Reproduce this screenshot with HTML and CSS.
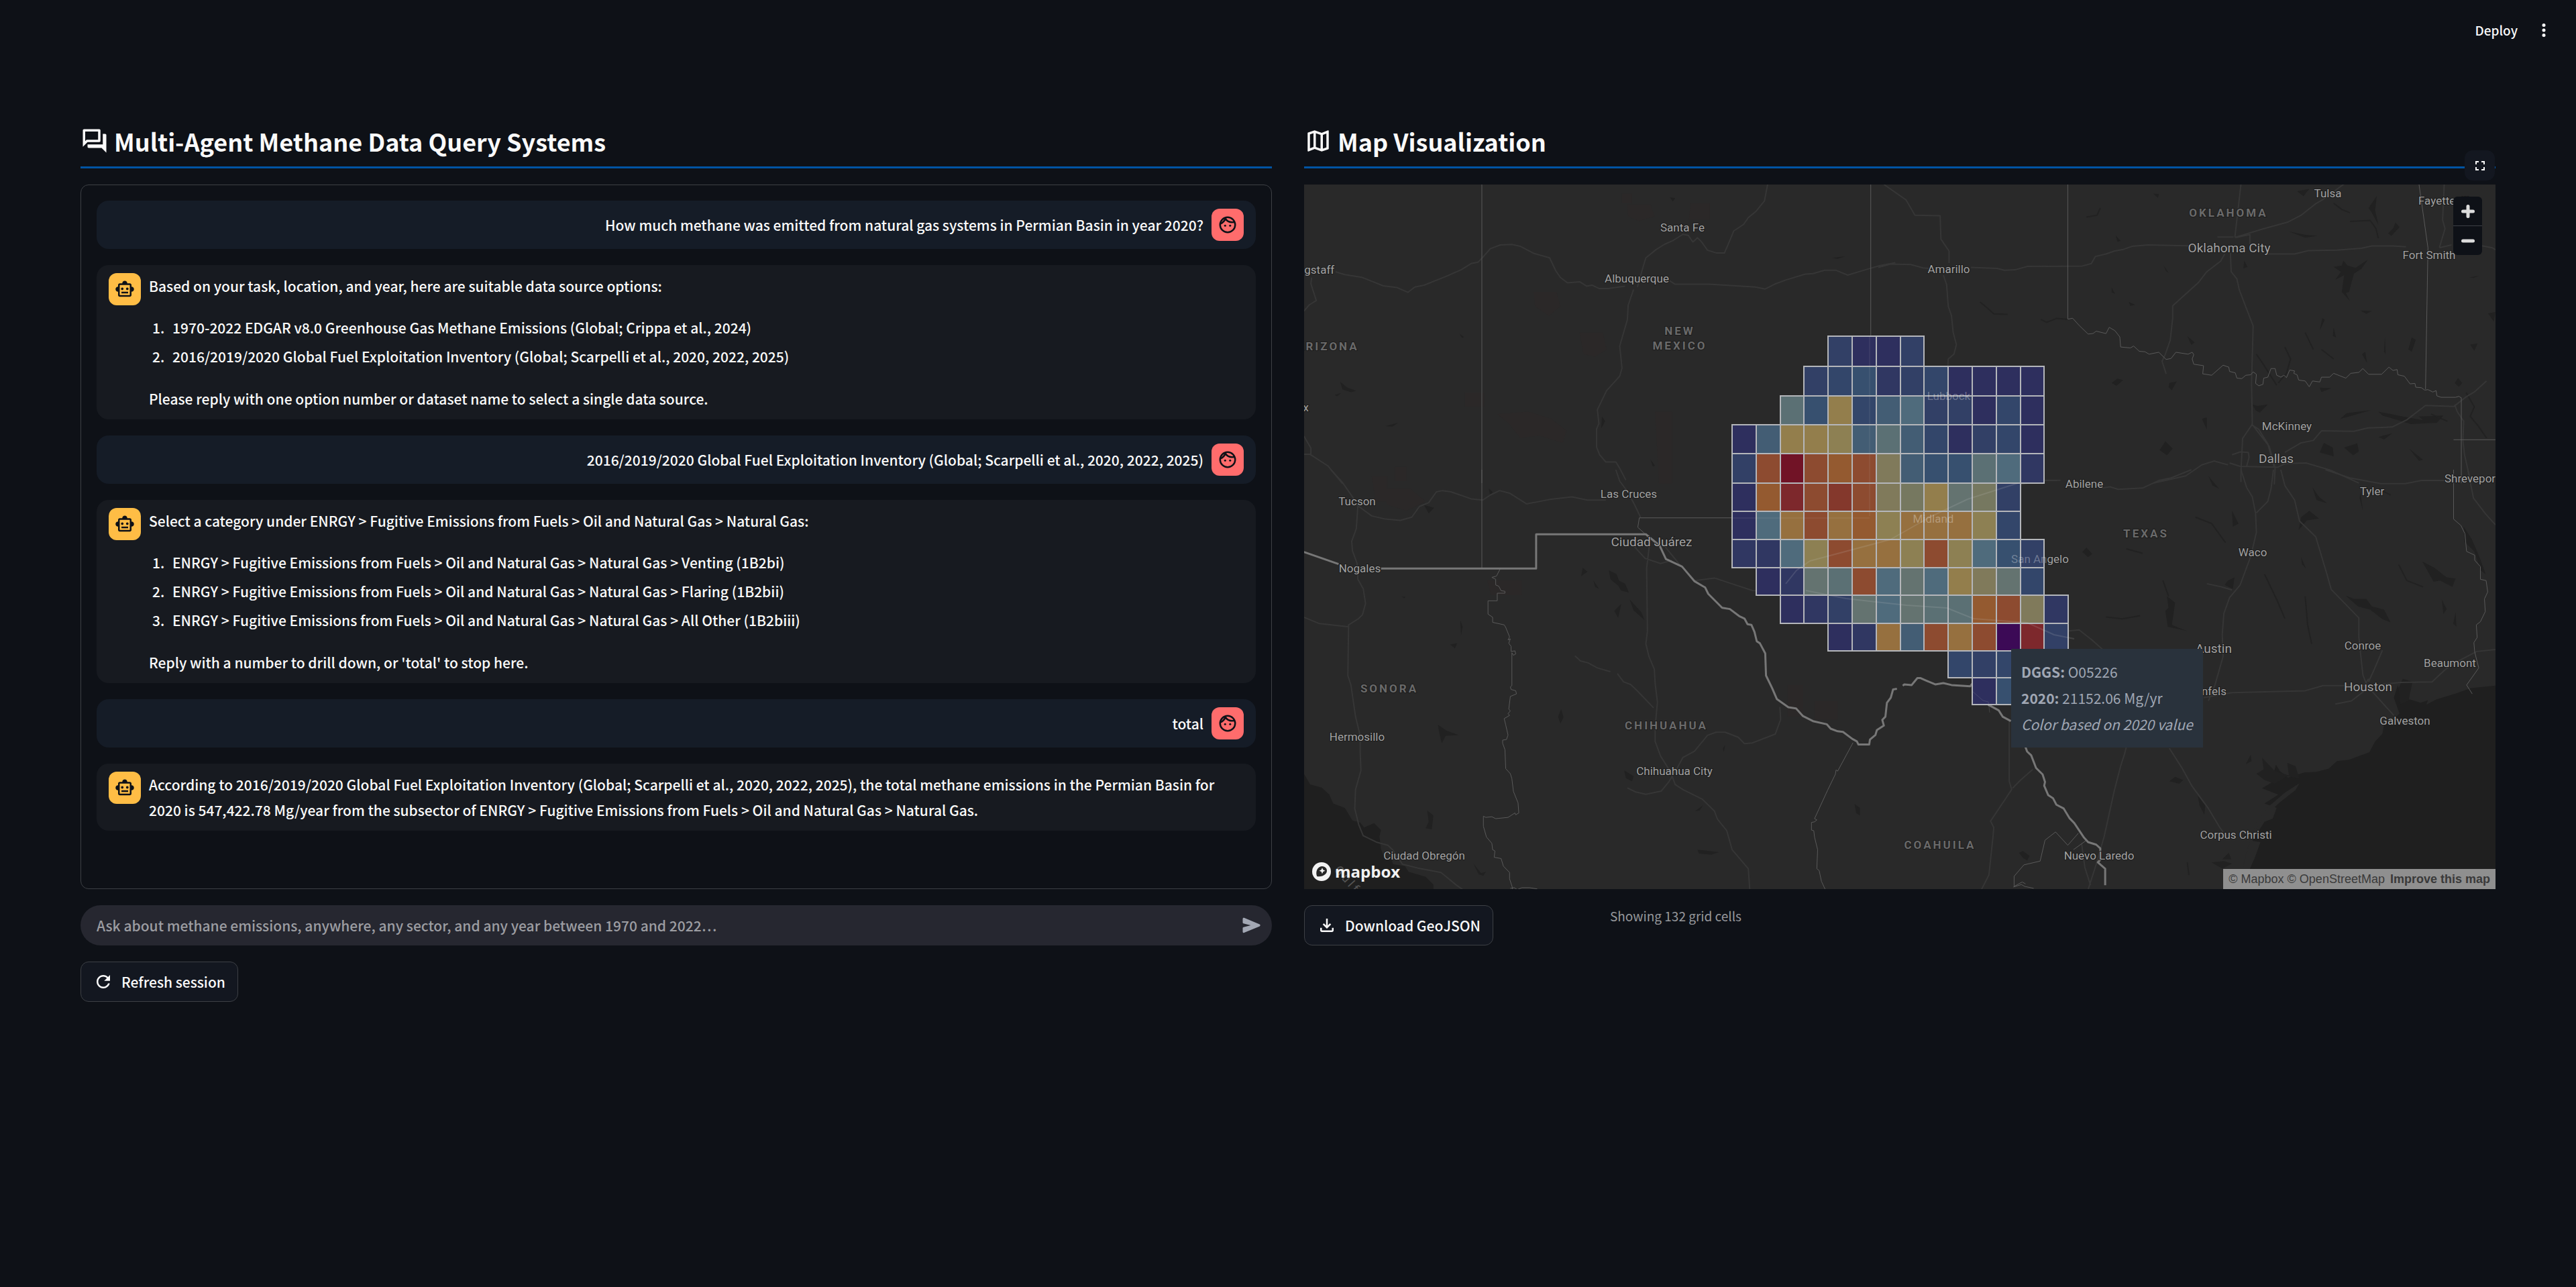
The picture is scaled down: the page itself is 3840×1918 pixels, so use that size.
FILE: index.html
```html
<!DOCTYPE html>
<html lang="en">
<head>
<meta charset="utf-8">
<meta name="viewport" content="width=device-width, initial-scale=1">
<title>Multi-Agent Methane Data Query Systems</title>
<link rel="stylesheet" href="styles.css">
</head>
<body>
<svg class="sprite" aria-hidden="true">
  <symbol id="i-face" viewBox="0 0 24 24"><g fill="none" stroke="currentColor" stroke-width="2"><circle cx="12" cy="12" r="9"/><path d="M3.400 10.800C6.200 9.700 8.300 7.600 9.400 4.400M9.300 4.600C11 7.500 14 9 17.500 9c1 0 1.900-.1 2.700-.3"/></g><circle cx="9" cy="13" r="1.250"/><circle cx="15" cy="13" r="1.250"/></symbol>
  <symbol id="i-bot" viewBox="0 0 24 24"><path d="M20 9V7c0-1.1-.9-2-2-2h-3c0-1.66-1.34-3-3-3S9 3.34 9 5H6c-1.1 0-2 .9-2 2v2c-1.66 0-3 1.34-3 3s1.34 3 3 3v4c0 1.1.9 2 2 2h12c1.1 0 2-.9 2-2v-4c1.66 0 3-1.34 3-3s-1.34-3-3-3zm-2 10H6V7h12v12zm-9-6c-.83 0-1.5-.67-1.5-1.5S8.17 10 9 10s1.5.67 1.5 1.5S9.83 13 9 13zm7.5-1.5c0 .83-.67 1.5-1.5 1.5s-1.5-.67-1.5-1.5.67-1.5 1.5-1.5 1.5.67 1.5 1.5zM8 15h8v2H8v-2z"/></symbol>
</svg>

<header class="topbar">
  <button class="deploy" type="button">Deploy</button>
  <button class="menu" type="button" aria-label="Main menu">
    <svg viewBox="0 0 24 24" class="icon"><circle cx="12" cy="6" r="2"/><circle cx="12" cy="12" r="2"/><circle cx="12" cy="18" r="2"/></svg>
  </button>
</header>

<main class="columns">
  <section class="column">
    <h2 class="title">
      <svg viewBox="0 0 24 24" class="icon icon-title"><path d="M15 4v7H5.17L4 12.17V4h11m1-2H3c-.55 0-1 .45-1 1v14l4-4h10c.55 0 1-.45 1-1V3c0-.55-.45-1-1-1zm5 4h-2v9H6v2c0 .55.45 1 1 1h11l4 4V7c0-.55-.45-1-1-1z"/></svg>
      Multi-Agent Methane Data Query Systems
    </h2>
    <div class="chat">
      <article class="message user">
        <div class="avatar"><svg class="icon"><use href="#i-face"/></svg></div>
        <div class="text"><p>How much methane was emitted from natural gas systems in Permian Basin in year 2020?</p></div>
      </article>
      <article class="message bot">
        <div class="avatar"><svg class="icon"><use href="#i-bot"/></svg></div>
        <div class="text">
          <p>Based on your task, location, and year, here are suitable data source options:</p>
          <ol>
            <li>1970-2022 EDGAR v8.0 Greenhouse Gas Methane Emissions (Global; Crippa et al., 2024)</li>
            <li>2016/2019/2020 Global Fuel Exploitation Inventory (Global; Scarpelli et al., 2020, 2022, 2025)</li>
          </ol>
          <p>Please reply with one option number or dataset name to select a single data source.</p>
        </div>
      </article>
      <article class="message user">
        <div class="avatar"><svg class="icon"><use href="#i-face"/></svg></div>
        <div class="text"><p>2016/2019/2020 Global Fuel Exploitation Inventory (Global; Scarpelli et al., 2020, 2022, 2025)</p></div>
      </article>
      <article class="message bot">
        <div class="avatar"><svg class="icon"><use href="#i-bot"/></svg></div>
        <div class="text">
          <p>Select a category under ENRGY &gt; Fugitive Emissions from Fuels &gt; Oil and Natural Gas &gt; Natural Gas:</p>
          <ol>
            <li>ENRGY &gt; Fugitive Emissions from Fuels &gt; Oil and Natural Gas &gt; Natural Gas &gt; Venting (1B2bi)</li>
            <li>ENRGY &gt; Fugitive Emissions from Fuels &gt; Oil and Natural Gas &gt; Natural Gas &gt; Flaring (1B2bii)</li>
            <li>ENRGY &gt; Fugitive Emissions from Fuels &gt; Oil and Natural Gas &gt; Natural Gas &gt; All Other (1B2biii)</li>
          </ol>
          <p>Reply with a number to drill down, or 'total' to stop here.</p>
        </div>
      </article>
      <article class="message user">
        <div class="avatar"><svg class="icon"><use href="#i-face"/></svg></div>
        <div class="text"><p>total</p></div>
      </article>
      <article class="message bot">
        <div class="avatar"><svg class="icon"><use href="#i-bot"/></svg></div>
        <div class="text"><p>According to 2016/2019/2020 Global Fuel Exploitation Inventory (Global; Scarpelli et al., 2020, 2022, 2025), the total methane emissions in the Permian Basin for 2020 is 547,422.78 Mg/year from the subsector of ENRGY &gt; Fugitive Emissions from Fuels &gt; Oil and Natural Gas &gt; Natural Gas.</p></div>
      </article>
    </div>
    <form class="prompt">
      <input class="prompt-input" type="text" aria-label="Question" placeholder="Ask about methane emissions, anywhere, any sector, and any year between 1970 and 2022…">
      <button class="send" type="button" aria-label="Send">
        <svg viewBox="0 0 24 24" class="icon"><path d="M3 5.51v3.71c0 .46.31.86.76.97L11 12l-7.24 1.81c-.45.12-.76.52-.76.97v3.71c0 .72.73 1.2 1.39.92l15.42-6.49c.82-.34.82-1.5 0-1.84L4.39 4.58C3.73 4.31 3 4.79 3 5.51z"/></svg>
      </button>
    </form>
    <button class="button" type="button">
      <svg viewBox="0 0 24 24" class="icon"><path d="M17.65 6.35C16.2 4.9 14.21 4 12 4c-4.42 0-7.99 3.58-7.99 8s3.57 8 7.99 8c3.73 0 6.84-2.55 7.73-6h-2.08c-.82 2.33-3.04 4-5.65 4-3.31 0-6-2.69-6-6s2.69-6 6-6c1.66 0 3.14.69 4.22 1.78L13 11h7V4l-2.35 2.35z"/></svg>
      Refresh session
    </button>
  </section>

  <section class="column">
    <h2 class="title">
      <svg viewBox="0 0 24 24" class="icon icon-title"><path d="M20.5 3l-.16.03L15 5.1 9 3 3.36 4.9c-.21.07-.36.25-.36.48V20.5c0 .28.22.5.5.5l.16-.03L9 18.9l6 2.1 5.64-1.9c.21-.07.36-.25.36-.48V3.5c0-.28-.22-.5-.5-.5zM10 5.47l4 1.4v11.66l-4-1.4V5.47zm-5 .99l3-1.01v11.7l-3 1.16V6.46zm14 11.08l-3 1.01V6.86l3-1.16v11.84z"/></svg>
      Map Visualization
    </h2>
    <div class="map">
      <svg class="basemap" viewBox="0 0 1776 1050" preserveAspectRatio="xMidYMid slice" role="img" aria-label="Methane emissions over the Permian Basin">
        <g class="nw" transform="translate(-14 -115) scale(.574 .3571)">
          <path class="lake" d="M118 1145l18 24 24 14-14 6-22-12zM236 1330l32-14-14 16zM796 1340l2-50 8 20zM924 1470l12 26-6 2zM1396 628l34-6-20 10zM428 945l12 14-6 2zM974 375l14 4-6 14zM104 1200l16-8-10 14z"/>
          <path class="woods" d="M850 360h26v40h-26zM864 405h60l10 50-40 20-28-20zM1028 400h50v70h-54zM620 770h60l10 60-30 40-36-40zM740 940h60l10 70-30 30-30-10zM526 1280l80-10 60 30 40 50-10 50-60-30-50 10-30-60zM936 1270h44v300h-34zM260 1500h30v60h-30zM442 1190h50v60h-50z"/>
          <path class="road" d="M106 686l24 12 44 11 56 36 36 7 28 20 18-22 24-8 56-36 40-28 26-26 18-6 10-16 22-40 26-16 30-2 22 8 36 30 40 18 16 54 12 28 18 22 32-4 18 18 14-4 18 14h24l44-10M880 760l-14 66-2 60-20 110 6 92-6 34-34 60-24 80 4 58-6 22v76l8 32 16 30h26l10 26 16 50M890 750l14-80 8-42 26-34 22-22 22-16 26-26 14 4 12 28 12-18 10 16 16 36 24 12h20l16-60 8-32 26-28 12-28 20-26 22-44 10-84M970 720l18 18h88l120 12 26 8 24-20 30-18 50-24 20-2 30-14h30l30 20 50-24 34-16 40-12M24 850l14-26 18-18-14-70 2-26M24 1372l18 50v26H24M40 1448l46 48 38 74"/>
          <path class="state" d="M486 321V1568M1496 321V960"/>
          <path class="state" d="M1530 321l40 46" opacity=".5"/>
        </g>
        <g class="ne" transform="translate(856 -115) scale(.606 .3571)">
          <path class="lake" d="M584 535l12 22-8 4zM676 360l14 2-2 16zM1144 640l10 20 20 10 30-34-16 38-18 20-6 36-6 40-8 4 10 34-20-38 6-70-22 20 14-34-18-20 20-6zM900 640l8 26-10 6zM702 660l12 30-6-6zM574 752l8 26-8-6zM616 812l16 12-12 4zM760 955l18 26-8 10zM1186 848l28 2-14 12zM1206 420l20-50-4 60 8 60-16-50zM1272 480l10 20-20 36-8-10 12-20zM1010 518l40 14 30 4-30 8zM574 1150l14-18 14 6-16 24zM716 1150l18-6-12 36-8-12zM920 1240l12 6 26-6-20 34-10-10zM1086 1170l28 2-24 16zM1136 1300l16-24 60-12-50 24zM1230 1270l60 20 50 16-30-46 20 30 60-4-16 30-64 6-70-36zM692 1430l14-36 18 30-14 28zM796 1300l12-6v50zM1086 1440l10-40 22 20 2 36zM1146 1420l32-18 4 34-14 16zM1306 1425l34 46-10 4zM1230 1376l34-16-20 26zM1418 1150l8-20 10 20-8 16zM1312 960l10 10-10 50-8-10zM1190 1030l8-10 4 46zM1092 880l6 6-12 44zM1120 920l6 40-8-6zM1246 960l2 70-4-10zM1500 860l18-6-4 40zM1030 350l30-10-14 30zM1456 990l18-4-8 30zM1454 710l24-8-14 10z"/>
          <path class="stream" d="M250 812l20 28 14 22 34 2M400 885l14 12 24-16 30 4M512 458l26-8 8-30M1120 400l20 26 20 14M1160 476l50-4 14 34 6 40M930 1030l20 50 30 80M1050 940l20 70M1090 1010l30 40M1000 1000l14 50-10 60-20 40M1360 1280l40 30M1446 1190l20 60-10 40 20 40 20 50"/>
          <path class="road" d="M0 668l30-14 50 2 30 14 14 2M228 668l64 4 18 8 26-2 30-14 136-2 22-10 10-30 26-10 20-12 24-8 20-12 40-6 114 4M160 700l8 40 4 90 8 40 4 68 8 52-6 40-14 20-2 60M174 650v-50l-20-50-2-98-62-2-22-64-54-64M892 321l-15 222M877 543l70-36 60-28 34-30 34-46 20-20 64-80M880 543l34-12v40M834 541h40M852 612l-10 30-34 44-20 44-64 98v54l-6 90-12 58-8 30 10 52M866 606l2 80 14 30 6 46 18 80 16 70-4 240 2 170-24 60-4 140v42M954 612h70l34-14 70-2 60-8 26-10h50l34 4M1380 586l14-80-6-36 4-150M1380 586l30-12M1480 576l30 10 8 8M918 1320l44 96 14 88-2 70M918 1324l18 20 22 60 16 100M870 1450l20-12 20 2 2 20-6 38M864 1484l26 14 92 4 20-16 50-2 60 30 70 54M1000 1440l40-40 30-10 20-40 80 2 34-14 60-4 36-30 46-60 70 4 30-40 20-20 30-46M1418 1240l6 30 16 40-2 80 4 60 16 120M676 1568l80-30 40-46 30-16 34 16M408 1556h40"/>
          <path class="state" d="M466 321V884l12-4 16 30 22 36 12-2 8-10 24 10 8-26 14 14 12 26 2 42 24 4 8-8 14 22 14 2 10 10 24-8 18 30 12-4 12-26 30 8 10-8 4 10-4 18 4 22 24 6-2 34 22 6 28-42 14 8 2 18 14 6 4 22 12 2 10-14 12-2 6-12 8 10-2 38 8 10 10-6 2-26 10-4 8-36h10l4 28 10 8 8-8 6 10 8-32 12 4-2 10 8 6 4 22 16 4 10 24 8-24 18 4 4-20h20l10-16 30 20 12-20 20-4 10-16 14 24h32l18-30 10 14 10-4 2 22 16 6 14 32 12-2 2 16 14 2 8 10 8-2 12 10 8-6 2 22 10 6h36l8-4 6 6V1568M1330 321l22 265-6 590M1415 1387h103"/>
        </g>
        <g class="sw" transform="translate(-14 425) scale(.574 .4719)">
          <path class="water" d="M0 940l24 20 16 34 30 10 20 22 10 28 30 14 20 40 20 6 10 16 26-14 18 22-4 20 4 40 6 20 20 12 6 16 30 6 10 18 44 16 20 24v30H0z"/>
          <path class="lake" d="M336 112l26 8-14 18zM504 60l10 10-6 14zM816 318l20 12 6 20 16 10 10 28-20-6-8-16-20-20zM870 410l30 40 8 24-28-30zM830 446l18-22-8 44zM776 350l14 26-10-6zM748 310l12 12-16 14zM684 780l8-24 6 26-8 20zM372 806l22 18 32 14-34 2-10 24-6-30zM344 1076l16 16-4 44-16-4 8-20zM1046 1200l30 4 26 4-20 8-32-4zM1454 1056l14 12v24l-10-8zM464 1244l20 30 12-4-6 12-12-4zM856 950l24 18-4 16-16-10zM1112 880l6-10-4 22zM278 400l10 2-4 4zM430 476l6 20-4 28zM404 552l18-4-6 16zM1040 1078l20-18-8 16z"/>
          <path class="woods" d="M230 60h70l40 40-50 30-50-20zM500 350h90v46h-80zM1280 680h40v100h-40zM1350 730h60v60h-60zM200 20h40v80h-30z"/>
          <path class="road" d="M160 110l40 36 36 10 38 4 30-10 20-34 24-12 20-34 16-4 22 4 52 22 30 4 20-16 24-14 26 8 44 34 60-14 58-8 40 10h48M164 116l-4 70-12 40 2 30 12 40 2 50 14 30 6 46-8 36-10 12-26 20-2 160 8 30 12 100 12 60v50l2 60-14 60-2 60 10 50 12 36 34 20 30 10 12 14 26 46 40 12 60 14 40 40 40 34 8 30M24 466l40 20 74 10M94 0l30 40 34 60M834 0l10 36 20 32 20 46 14 36M922 230l-8 80 2 200-4 40 8 40 14 40 2 44 6 60-6 80v44l14 46 26 50 12 40 20 16 50 30 32 38 8 26 24 36 14 60 42 60 4 70 38 48M728 588l14 16 20 6 24 16 34 12M838 644l16 26 18 8 16 18 44 56M864 1005l20 12 28 8 40-10 20-30 20-40 16-36 30-20 34-50 22-10h24l34 16 16 20 20-2 60-28 14-46-2-40M880 240l30 40 40 16 30-10M960 240l40 60 40 50 50-8 50 20 50 20h60"/>
          <path class="state" d="M486 0V312M1135 152H895l-4 30 20 22M534 312l-10 24-12 4 10 6v18l8 4 6 14 10 2v6h-20v24h-24v42l12 10v16l30 8 4 8 10 30-4 10 6-4-4 14 6 10v16l10-2 2 10-6 4-4-8v104l-4 4 2 8 12 4 2 10-16 8-4 40 4 6-6 8 4 6-14 10 4 20 6 32-4 14-10 2v10l6 20 2 60 12 16 4 16 4 40 12 36 2 32-8 6-2-6-18 14-32 4-10-6-16 2-6-4v32l8 34 14 20 2 20 6 4-2 20 18 4 6 24 16 20v20l8 30-10 20v16l10 12-2 14M560 1322l10-2 8 6 12-6h20l20 4M1450 862l-40 90-4-4-2 14-20 50-34 90 6 4-6 6-8 2v24l6 2 2 20 8 40-2 60 6 6 6 34 10 26"/>
          <path class="border" d="M24 260l90 38M224 312H627V204H912l36 36 16 42 42 24 32 46 28 20 8 20 36 44 20 4 24 22 14 8 8 18 10 2 8 22 6 30 8 6 14 32 2 70 16 40 12 34 30 26 20 4 18 24 26 16 36 10 10 14 18 8 14 2 24 22 12 8 4 10h28l2-16 14-14 4-16 18-14-4-18 8-10 4-44 10-16 6-26 10-2"/>
        </g>
        <g class="se" transform="translate(856 425) scale(.606 .4719)">
          <path class="water" d="M1518 682l-60 8-36 16-50 20-24 16 4-14-18 8-26-10-20 4-10-50-10 40 14 50-16 20-22 14-4 30-18 24-14 34-50 24-30 4-20 24-30 10-30 2-40 16-20-20-10-20-6 30-16-10 14 34-26 20 40 20-34 28 30 14-10 34-20 10-30 60 20 4-14 50-14 40-10 54-12 60h634z"/>
          <path class="land" d="M1036 990l-36 30-40 44-30 50-16 60-14 60-4 28 10-50 14-60 26-50 40-50 40-40z"/>
          <path class="lake" d="M812 20l26 40-16-10zM1068 56l16 30 20 20-26-10zM1186 70l6 60-8-40zM1040 150l20-20 24 24-30 6-20 30zM870 130l16 40-14 10zM502 260l10-14 14 20-10 10zM1040 276l12 36-10-14zM1338 290l30 20 30 30 22 4-8 26-30-20-16 4zM860 350l16-10-4 36-20-12zM710 400l20 20-8 70 38 20-12-4-36-10-6-50 8-10zM1150 398l20 10 30 0 14 24 30 10 16 40-20-10-30-30-30-10zM1386 410l12 30-8 16zM1420 450l2 46-8-10zM930 960l20 20 26 12 30-24 30 8-10-40-20-10 4 40-36-16-30-40 4 36zM716 984l14-14 20 10-10 12zM786 1030l18 30-2 30-12-30zM346 1210l10-6 16 16-6 14-10-8zM820 1240l30-4 20 8-24 16zM904 930l12-30 2 20zM846 1230l16-20 6 20zM1280 690l10-30 24 10-10 60-20 10zM1440 180l20 40 20 60 14 50-12-12-16-60-24-30z"/>
          <path class="stream" d="M610 250l40 14M560 465l40 6 44-10M780 150l40 20 34 60M1230 60l30 20M1280 300l20 50 40 20M950 330l30 80 20 60M1050 400l6 90 10 60M700 350l14 50M760 1240l4 40"/>
          <path class="road" d="M770 0l-50 26-30 8-40 24-60 4-20-8-20 4M440 34h-40l-60 16M892 0l14 56 14 30 8 52 2 60-14 76-26 90-26 40-14 50-4 66 2 70-20 90-16 50M972 0l-6 60-8 40-28 36M990 0l10 50 24 46 12 66 40 50 28 120 10 46 68 90v60l4 50 6 70 10 34 66 94M1100 0l60 26 76 18h60l40-10h74M808 360l36 10 26 10M410 520l50-10 34-4 30 30 30 34M800 720l70-16 180-6 44-16h110l80-10 78-2 30-36 20-20 60-40 46-6M1206 660l-10 20M1240 570l-20 60-14 40M1124 740l40-10 40-40M716 880l30 60 26 60 40 70 28 60 8 14M610 876l-4 20-10 40-16 80-24 140-20 90-20 80M322 794v190l6 26-52 100 8 20-2 30-10 120-20 50M380 946l-30 34-20 26M500 1180l8 76 14 56M1450 0l14 90 30 50 24 34"/>
          <path class="state" d="M1415 0v156l18 20 10 26 4 56 20 12v16l14 20v40l14 4 4 36-8 22 2 40-12 32-10 10 2 40-8 16 2 30 10 50-30 54 14 28M492 1148l-26 38-30-42-26 26-12 66-40 12-24 36v32l20-14 8 6M510 1172l-30 28M332 1318l20-8 8 6 22 6"/>
          <path class="border" d="M60 682l4-4 18 2 14-22 8 0 14 8 22 12 20-4 20 6 46 4 6-10M270 742l26 18 10 20 20 14M362 876l4 14 10 12 12 40 16 20 6 24-2 12 10 30 12 10 8 20 18 12 14 30 12 16 24 46 10 14 20 8 10 12v36l-6 8 18 20v52"/>
        </g>
        <g class="cells"></g>
        <g class="overlines">
          <path class="road" d="M1064 445l-75 24-55 26-60 34-120 32-20 14-16 20M748 605l60 12 90 10 60 4 40 16 80 6 40 18 30 6"/>
          <path class="state" d="M843 226v268M637 497h206M996 755l16 14 8 2 2 16"/>
        </g>
        <g class="places">
          <text class="city" x="564" y="70">Santa Fe</text>
          <text class="city" x="496" y="146">Albuquerque</text>
          <text class="city" x="-9" y="133" text-anchor="start">agstaff</text>
          <text class="city" x="961" y="132">Amarillo</text>
          <text class="metro" x="1379" y="101">Oklahoma City</text>
          <text class="city" x="1526" y="19">Tulsa</text>
          <text class="city" x="1661" y="30" text-anchor="start">Fayetteville</text>
          <text class="city" x="1677" y="111">Fort Smith</text>
          <text class="city" x="1465" y="366">McKinney</text>
          <text class="metro" x="1449" y="415">Dallas</text>
          <text class="city" x="1163" y="452">Abilene</text>
          <text class="city" x="1592" y="463">Tyler</text>
          <text class="city" x="1700" y="444" text-anchor="start">Shreveport</text>
          <text class="city" x="1414" y="554">Waco</text>
          <text class="city covered" x="961" y="321">Lubbock</text>
          <text class="city covered" x="938" y="504">Midland</text>
          <text class="city" x="1097" y="564"><tspan class="covered">San An</tspan>gelo</text>
          <text class="metro" x="1356" y="698">Austin</text>
          <text class="city" x="1578" y="693">Conroe</text>
          <text class="city" x="1708" y="719">Beaumont</text>
          <text class="metro" x="1586" y="755">Houston</text>
          <text class="city" x="1375" y="761" text-anchor="end">New Braunfels</text>
          <text class="city" x="1641" y="805">Galveston</text>
          <text class="city" x="1389" y="975">Corpus Christi</text>
          <text class="city" x="1185" y="1006">Nuevo Laredo</text>
          <text class="city" x="79" y="478">Tucson</text>
          <text class="city" x="484" y="467">Las Cruces</text>
          <text class="metro" x="518" y="539">Ciudad Juárez</text>
          <text class="city" x="83" y="578">Nogales</text>
          <text class="city" x="79" y="829">Hermosillo</text>
          <text class="city" x="552" y="880">Chihuahua City</text>
          <text class="city" x="179" y="1006">Ciudad Obregón</text>
          <text class="city" x="7" y="338" text-anchor="end">Phoenix</text>
          <text class="region" x="560" y="224">NEW</text>
          <text class="region" x="560" y="246">MEXICO</text>
          <text class="region" x="-12" y="247" text-anchor="start">ARIZONA</text>
          <text class="region" x="1378" y="48">OKLAHOMA</text>
          <text class="region" x="1255" y="526">TEXAS</text>
          <text class="region" x="127" y="757">SONORA</text>
          <text class="region" x="540" y="812">CHIHUAHUA</text>
          <text class="region" x="948" y="990">COAHUILA</text>
          <text class="sea" transform="translate(44 1022) rotate(48)">Gulf</text>
        </g>
      </svg>
      <div class="zoom">
        <button class="zoom-button" type="button" aria-label="Zoom in"><svg viewBox="0 0 24 24" class="icon"><path d="M12 6v12M6 12h12"/></svg></button>
        <button class="zoom-button" type="button" aria-label="Zoom out"><svg viewBox="0 0 24 24" class="icon"><path d="M6 12h12"/></svg></button>
      </div>
      <button class="fullscreen" type="button" aria-label="Fullscreen">
        <svg viewBox="0 0 24 24" class="icon"><path d="M7 14H5v5h5v-2H7v-3zm-2-4h2V7h3V5H5v5zm12 7h-3v2h5v-5h-2v3zM14 5v2h3v3h2V5h-5z"/></svg>
      </button>
      <div class="tooltip"><b>DGGS:</b> O05226<br><b>2020:</b> 21152.06 Mg/yr<br><i>Color based on 2020 value</i></div>
      <a class="logo" href="#mapbox">
        <svg viewBox="0 0 28 28" class="logo-mark"><circle cx="14" cy="14" r="14" fill="#f2f2f2"/><path fill="#262626" d="M7.200 21C5 15 7 9.500 10.800 7.200c3.400-2 7.500-1.300 9.700 1.300 2.300 2.800 1.900 6.700-.8 9.300C16.400 21 11.500 21.600 7.200 21z"/><path fill="#f2f2f2" d="M15 8.200l1.400 3.100 3.100 1.400-3.100 1.400L15 17.200l-1.400-3.100-3.100-1.400 3.100-1.400z"/></svg>
        mapbox
      </a>
      <div class="attribution"><a href="#mapbox">© Mapbox</a> <a href="#osm">© OpenStreetMap</a> <a class="improve" href="#improve">Improve this map</a></div>
    </div>
    <div class="under-map">
      <div>
        <button class="button" type="button">
          <svg viewBox="0 0 24 24" class="icon"><path d="M18 15v3H6v-3H4v3c0 1.100.9 2 2 2h12c1.100 0 2-.9 2-2v-3h-2zm-1-4l-1.410-1.410L13 12.170V4h-2v8.170L8.410 9.590 7 11l5 5 5-5z"/></svg>
          Download GeoJSON
        </button>
      </div>
      <p class="caption">Showing 132 grid cells</p>
    </div>
  </section>
</main>
<script src="cells.js"></script>
</body>
</html>
```

FILE: styles.css
```css
* { box-sizing: border-box; }

body {
  margin: 0;
  min-height: 100vh;
  background: #0e1117;
  color: #fafafa;
  font-family: "Noto Sans CJK SC", "Noto Sans", sans-serif;
  font-size: 21px;
  font-weight: 500;
  line-height: 38px;
}

button, input { font: inherit; color: inherit; }
button { border: 0; background: none; padding: 0; cursor: pointer; }
p, h2, ol { margin: 0; }
a { color: inherit; text-decoration: none; }

.sprite { display: none; }
.icon { width: 30px; height: 30px; fill: currentColor; flex: none; }

.topbar {
  display: flex;
  justify-content: flex-end;
  align-items: center;
  gap: 24px;
  height: 90px;
  padding-right: 33px;
}
.deploy { font-size: 19px; }
.menu { display: flex; }

.columns {
  display: grid;
  grid-template-columns: 1fr 1fr;
  gap: 48px;
  padding: 96px 120px;
}
.column {
  display: flex;
  flex-direction: column;
  align-items: flex-start;
  gap: 24px;
  min-width: 0;
}

.title {
  display: flex;
  align-items: center;
  gap: 8px;
  width: 100%;
  padding-bottom: 14px;
  border-bottom: 3px solid #0054a3;
  font-size: 36px;
  font-weight: 700;
  line-height: 48px;
}
.icon-title { width: 42px; height: 42px; }

.chat {
  display: flex;
  flex-direction: column;
  gap: 24px;
  width: 100%;
  height: 1050px;
  padding: 23px;
  border: 1px solid #3d4045;
  border-radius: 12px;
  overflow: auto;
}
.message {
  display: flex;
  gap: 12px;
  padding: 12px 18px;
  border-radius: 18px;
}
.user {
  flex-direction: row-reverse;
  align-items: center;
  background: #151c27;
}
.bot { background: #171a20; }
.avatar {
  display: grid;
  place-items: center;
  flex: none;
  width: 48px;
  height: 48px;
  border-radius: 12px;
  color: #0e1117;
}
.user .avatar { background: #ff6c6c; }
.bot .avatar { background: #ffbd45; }
.text { min-width: 0; }
.text ol {
  display: grid;
  gap: 5px;
  margin: 24px 0 25px;
  padding-left: 28px;
}
.text li { padding-left: 7px; }

.prompt {
  display: flex;
  align-items: center;
  width: 100%;
  height: 60px;
  padding: 0 12px 0 24px;
  border-radius: 30px;
  background: #262730;
}
.prompt-input {
  flex: 1;
  padding: 0;
  border: 0;
  outline: 0;
  background: none;
}
.prompt-input::placeholder { color: #9c9da2; opacity: 1; }
.send { display: flex; color: #a3a8b4; }
.send .icon { width: 36px; height: 36px; }

.button {
  display: flex;
  align-items: center;
  gap: 12px;
  height: 60px;
  padding: 0 18px;
  border: 1px solid #3d4045;
  border-radius: 12px;
  background: #131720;
}

.map {
  position: relative;
  width: 100%;
  height: 1050px;
  background: #292929;
}
.basemap { display: block; width: 100%; height: 100%; }
.basemap path { vector-effect: non-scaling-stroke; stroke-linejoin: round; }
.basemap .water { fill: #1f1f1f; }
.basemap .land { fill: #292929; }
.basemap .lake { fill: #212121; }
.basemap .woods { fill: #2b2828; }
.stream, .road, .state, .border { fill: none; }
.stream { stroke: #222; stroke-width: 2px; }
.road { stroke: #363636; stroke-width: 2px; }
.state { stroke: #5a5a5a; stroke-width: 1px; }
.border { stroke: #777; stroke-width: 3px; }
.cells rect { stroke: #b4b6ba; stroke-width: 2px; }
.overlines { opacity: .15; }
.overlines path { stroke: #ccc; }
.places text {
  font-family: Roboto, sans-serif;
  font-weight: 400;
  text-anchor: middle;
  fill: #a2a2a2;
  stroke: #1c1c1c;
  stroke-width: 2px;
  paint-order: stroke;
}
.places text[text-anchor="start"] { text-anchor: start; }
.places text[text-anchor="end"] { text-anchor: end; }
.places .city { font-size: 17px; }
.places .metro { font-size: 19px; }
.places .region { font-size: 17px; font-weight: 700; letter-spacing: 3px; fill: #6a6a6a; }
.places .sea { font-size: 18px; letter-spacing: 4px; text-anchor: start; fill: #555; stroke: none; }
.places .covered { fill: #fff; fill-opacity: .3; stroke: none; }

.zoom {
  position: absolute;
  top: 18px;
  right: 20px;
  width: 43px;
  border-radius: 6px;
  background: #0e1117;
  overflow: hidden;
}
.zoom-button {
  display: grid;
  place-items: center;
  width: 100%;
  height: 43px;
}
.zoom-button + .zoom-button { height: 44px; border-top: 1px solid #3d4045; }
.zoom .icon { stroke: #dcdcdc; stroke-width: 4; stroke-linecap: round; }

.fullscreen {
  position: absolute;
  top: -51px;
  right: 1px;
  display: grid;
  place-items: center;
  width: 45px;
  height: 45px;
  border-radius: 12px;
  background: #131720;
}
.fullscreen .icon { width: 24px; height: 24px; }

.tooltip {
  position: absolute;
  top: 692px;
  left: 1054px;
  padding: 15px;
  background: #29323c;
  color: #a0a7b4;
  font-weight: 400;
  line-height: 39px;
  white-space: nowrap;
}

.logo {
  position: absolute;
  left: 12px;
  bottom: 12px;
  display: flex;
  align-items: center;
  gap: 6px;
  color: #f2f2f2;
  font: 700 24px/28px "Open Sans", sans-serif;
}
.logo-mark { width: 28px; height: 28px; }

.attribution {
  position: absolute;
  right: 0;
  bottom: 0;
  padding: 0 8px;
  background: #8f8f8f;
  color: #3a3a3a;
  font: 18px/30px "Liberation Sans", Arial, sans-serif;
}
.improve { margin-left: 3px; font-weight: 700; }

.under-map {
  display: grid;
  grid-template-columns: 1fr 3fr;
  gap: 16px;
  width: 100%;
}
.caption {
  color: #96989c;
  font-size: 19px;
  font-weight: 400;
  line-height: 32px;
}
```

FILE: cells.js
```js
// Grid cells of the Permian Basin: one string per row, one colour key per cell.
const colours = {
  a: '#2e2f5e', b: '#303762', c: '#324066', d: '#33466a', e: '#37506f',
  f: '#435d74', g: '#4f6b7c', s: '#5b7074', h: '#647370', t: '#767860',
  i: '#807a5b', j: '#8d8053', k: '#937e4c', l: '#96703f', m: '#945a30',
  n: '#8d4b30', o: '#84382c', p: '#7d282c', q: '#711326', r: '#3c0a56',
};
const rows = [
  '....caac',
  '...cdebcdaaaa',
  '..sekdfgccada',
  'afkkjfsfdacda',
  'cnqnmnifeesgb',
  'ampnonitkhtc',
  'aglnlmjllljd',
  'bbgjnlljnjgec',
  '.abhsnghgkihd',
  '..abchghssmnib',
  '....ablfnlnrpc',
  '.........dcd',
  '..........ae',
];
const tops = [226, 271, 315, 358, 401, 445, 487, 529, 571, 612, 654, 695, 735, 775];
const left = 638;
const step = 35.8;
const layer = document.querySelector('.cells');

rows.forEach((row, r) => {
  [...row].forEach((key, c) => {
    if (key === '.') return;
    const cell = document.createElementNS('http://www.w3.org/2000/svg', 'rect');
    cell.setAttribute('x', Math.round(left + c * step));
    cell.setAttribute('y', tops[r]);
    cell.setAttribute('width', Math.round(left + (c + 1) * step) - Math.round(left + c * step));
    cell.setAttribute('height', tops[r + 1] - tops[r]);
    cell.setAttribute('fill', colours[key]);
    layer.append(cell);
  });
});
```
